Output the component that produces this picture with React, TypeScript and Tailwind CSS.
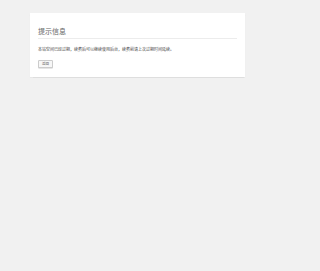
import React from "react";

export default function App() {
  return (
    <div
      className="min-h-[271px] w-full bg-[#f1f1f1] pt-[13px]"
      style={{ fontFamily: '"Noto Sans CJK SC", "Noto Sans", sans-serif' }}
    >
      <div className="ml-[30px] w-[215px] bg-white px-[8px] pb-[9px] pt-[13px] shadow-[0_0.5px_1px_rgba(0,0,0,0.08)]">
        {/* Title */}
        <h1 className="border-b border-[#ececec] pb-[2px] text-[7px] leading-[10px] text-[#666]">
          提示信息
        </h1>
        {/* Message */}
        <p className="mt-[7px] text-[4px] leading-[6px] text-[#444]">
          本站空间已经过期，续费后可以继续使用后台，续费前请上次过期时间延续。
        </p>
        {/* Back button */}
        <div className="mt-[8px] flex">
          <button className="flex h-[8px] w-[15px] items-center justify-center rounded-[1px] border-[0.5px] border-[#ccc] bg-[#f7f7f7] text-[3.5px] leading-none text-[#555] shadow-[0_0.5px_0_#ccc]">
            返回
          </button>
        </div>
      </div>
    </div>
  );
}
